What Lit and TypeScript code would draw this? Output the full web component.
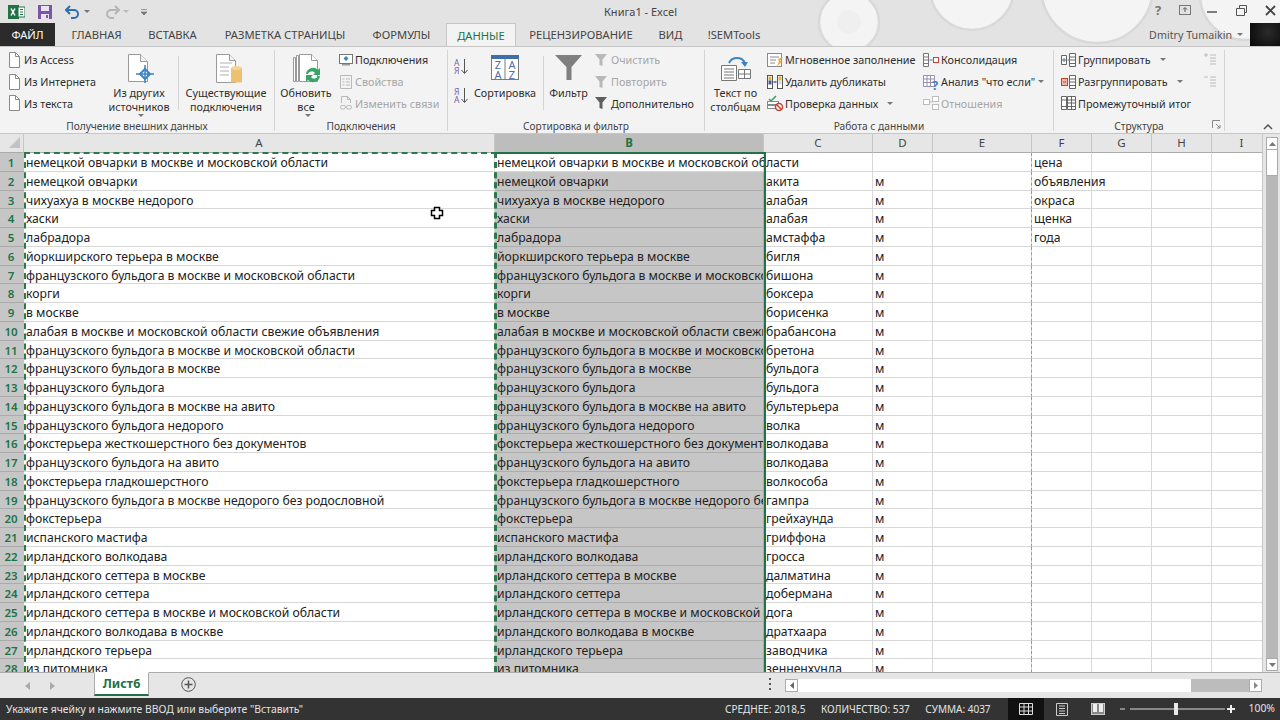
import { LitElement, html, css } from 'lit';
import { customElement } from 'lit/decorators.js';

const colA = [
  'немецкой овчарки в москве и московской области', 'немецкой овчарки', 'чихуахуа в москве недорого', 'хаски', 'лабрадора',
  'йоркширского терьера в москве', 'французского бульдога в москве и московской области', 'корги', 'в москве',
  'алабая в москве и московской области свежие объявления', 'французского бульдога в москве и московской области',
  'французского бульдога в москве', 'французского бульдога', 'французского бульдога в москве на авито',
  'французского бульдога недорого', 'фокстерьера жесткошерстного без документов', 'французского бульдога на авито',
  'фокстерьера гладкошерстного', 'французского бульдога в москве недорого без родословной', 'фокстерьера',
  'испанского мастифа', 'ирландского волкодава', 'ирландского сеттера в москве', 'ирландского сеттера',
  'ирландского сеттера в москве и московской области', 'ирландского волкодава в москве', 'ирландского терьера', 'из питомника',
];
const colC = [
  '', 'акита', 'алабая', 'алабая', 'амстаффа', 'бигля', 'бишона', 'боксера', 'борисенка', 'брабансона', 'бретона', 'бульдога',
  'бульдога', 'бультерьера', 'волка', 'волкодава', 'волкодава', 'волкособа', 'гампра', 'грейхаунда', 'гриффона', 'гросса',
  'далматина', 'добермана', 'дога', 'дратхаара', 'заводчика', 'зенненхунда',
];
const colF = ['цена', 'объявления', 'окраса', 'щенка', 'года'];
const columns = ['A', 'B', 'C', 'D', 'E', 'F', 'G', 'H', 'I'];
const tabs = [
  ['ГЛАВНАЯ', 75], ['ВСТАВКА', 77], ['РАЗМЕТКА СТРАНИЦЫ', 148], ['ФОРМУЛЫ', 85],
] as const;
const tabsAfter = [['РЕЦЕНЗИРОВАНИЕ', 130], ['ВИД', 49], ['!SEMTools', 78]] as const;

const doc = (extra: unknown) => html`<svg class="ic" width="16" height="16" viewBox="0 0 16 16">
  <path d="M2.5 .5h6l4 4v11h-10z" fill="#fff" stroke="#8a8a8a"/><path d="M8.5 .5v4h4" fill="none" stroke="#8a8a8a"/>${extra}
</svg>`;
const line = (d: string, c = '#7d7d7d') => html`<svg class="ic" width="16" height="16" viewBox="0 0 16 16" fill="none" stroke=${c}><path d=${d}/></svg>`;
const funnel = (c: string, extra: unknown = '') => html`<svg class="ic" width="16" height="16" viewBox="0 0 16 16">
  <path d="M1 2h12L8.5 7.500V14l-3-1V7.500z" fill=${c}/>${extra}
</svg>`;

const icons = {
  access: doc(html`<rect x="6" y="6" width="9" height="9" fill="#b5342c"/><text x="10.500" y="13.500" font-size="8" fill="#fff" text-anchor="middle">A</text>`),
  web: doc(html`<circle cx="10.500" cy="11" r="4.500" fill="#3f83c4"/><path d="M6 11h9M10.500 6.500v9" stroke="#fff" stroke-width=".8"/>`),
  text: doc(html`<rect x="7" y="7" width="7" height="8" fill="#fff" stroke="#8a8a8a"/><path d="M8.500 9.500h4M8.500 11.500h4M8.500 13.500h4" stroke="#8a8a8a"/>`),
  conn: html`<svg class="ic" width="16" height="16" viewBox="0 0 16 16"><rect x="1.500" y="2.500" width="13" height="9" fill="#fff" stroke="#777"/><rect x="4" y="12" width="8" height="1.500" fill="#999"/><path d="M8 4l2.500 2.500L8 9 5.500 6.500z" fill="#3f83c4"/></svg>`,
  props: line('M2.500 1.500h11v13h-11zM4.500 5h2M8 5h4M4.500 8h2M8 8h4M4.500 11h2M8 11h4', '#b9b9b9'),
  links: html`<svg class="ic" width="16" height="16" viewBox="0 0 16 16" fill="none" stroke="#b9b9b9"><path d="M3.500 8V1.500h6l3 3V8M9.500 1.500v3h3"/><rect x="2.500" y="10.500" width="5" height="3.500" rx="1.700"/><rect x="8.500" y="10.500" width="5" height="3.500" rx="1.700"/></svg>`,
  flash: html`<svg class="ic" width="18" height="16" viewBox="0 0 18 16"><rect x="1.500" y="1.500" width="14" height="13" fill="#fff" stroke="#8a8a8a"/><path d="M4 5h9M4 8h6M4 11h5" stroke="#8a8a8a"/><path d="M12 7l5-2-3 4 2 .5-5 5 2-5z" fill="#e9a92b"/></svg>`,
  dupes: html`<svg class="ic" width="18" height="16" viewBox="0 0 18 16"><rect x="1.500" y="1.500" width="5" height="13" fill="#fff" stroke="#555"/><rect x="11.500" y="1.500" width="5" height="13" fill="#fff" stroke="#555"/><rect x="2.500" y="2.500" width="3" height="4" fill="#e4b33a"/><rect x="2.500" y="6.500" width="3" height="4" fill="#3f5ea8"/><rect x="12.500" y="2.500" width="3" height="4" fill="#e4b33a"/><rect x="12.500" y="6.500" width="3" height="4" fill="#d8d8d8"/><path d="M7.500 8h3" stroke="#3f5ea8" stroke-width="1.500"/></svg>`,
  valid: html`<svg class="ic" width="18" height="16" viewBox="0 0 18 16"><rect x="1.500" y="6.500" width="11" height="3" fill="#fff" stroke="#8a8a8a"/><rect x="1.500" y="10.500" width="8" height="3" fill="#fff" stroke="#8a8a8a"/><path d="M3 4l2 2 5-5" fill="none" stroke="#3c9a5f" stroke-width="1.500"/><circle cx="13" cy="12" r="3.500" fill="#fff" stroke="#c8402f" stroke-width="1.500"/><path d="M10.500 9.500l5 5" stroke="#c8402f" stroke-width="1.500"/></svg>`,
  cons: html`<svg class="ic" width="18" height="16" viewBox="0 0 18 16"><path d="M1.500 1.500h5v13h-5zM1.500 5h5M1.500 8h5M1.500 11.500h5" fill="#fff" stroke="#777"/><path d="M7.500 8h3" stroke="#3f83c4"/><rect x="11.500" y="5.500" width="5" height="5" fill="#fff" stroke="#c8402f"/></svg>`,
  whatif: html`<svg class="ic" width="18" height="16" viewBox="0 0 18 16"><path d="M1.500 1.500h11v11h-11zM1.500 5h11M1.500 8.500h11M5 1.500v11M8.500 1.500v11" fill="#fff" stroke="#9a8fb0"/><text x="10" y="15.500" font-size="13" font-weight="700" fill="#3f83c4">?</text></svg>`,
  rel: html`<svg class="ic" width="18" height="16" viewBox="0 0 18 16" fill="#fff" stroke="#bdbdbd"><rect x="1.500" y="4.500" width="6" height="5"/><rect x="10.500" y="1.500" width="6" height="5"/><rect x="10.500" y="9.500" width="6" height="5"/><path d="M7.500 7h3"/></svg>`,
  clear: funnel('#b8b8b8', html`<path d="M9 10l5 5M14 10l-5 5" stroke="#b8b8b8" stroke-width="1.500"/>`),
  repeat: funnel('#b8b8b8', html`<circle cx="12" cy="12" r="3" fill="none" stroke="#b8b8b8" stroke-width="1.500"/>`),
  adv: funnel('#5f5f5f', html`<path d="M9 15l1-3 4-4 2 2-4 4z" fill="#3f83c4"/>`),
  group: html`<svg class="ic" width="17" height="16" viewBox="0 0 17 16" fill="#fff" stroke="#666"><path d="M1.500 3.500h5v9h-5zM1.500 8h5M9.500 1.500h6v13h-6zM9.500 5h6M9.500 8h6M9.500 11.500h6"/><path d="M4 6v4M7.500 8H9" stroke="#3f83c4"/></svg>`,
  ungroup: html`<svg class="ic" width="17" height="16" viewBox="0 0 17 16" fill="#fff" stroke="#666"><path d="M9.500 1.500h6v13h-6zM9.500 5h6M9.500 8h6M9.500 11.500h6"/><rect x="1.500" y="4.500" width="6" height="7" fill="#f3b7ab" stroke="#c8402f"/><path d="M3 8h3" stroke="#c8402f"/></svg>`,
  subtotal: html`<svg class="ic" width="17" height="16" viewBox="0 0 17 16" fill="#fff" stroke="#666"><path d="M1.500 1.500h5v13h-5zM1.500 5h5M1.500 11.500h5M7.500 1.500h8v13h-8zM7.500 5h8M7.500 8h8M7.500 11.500h8M11.500 1.500v13"/></svg>`,
  sortAZ: html`<svg width="16" height="24" viewBox="0 0 16 24"><text x="0" y="9" font-size="8.500" fill="#7b5fa8">А</text><text x="0" y="17" font-size="8.500" fill="#7b5fa8">Я</text><path d="M10.500 2v14M7.500 13l3 3.500 3-3.500" fill="none" stroke="#555"/></svg>`,
  sortZA: html`<svg width="16" height="24" viewBox="0 0 16 24"><text x="0" y="9" font-size="8.500" fill="#7b5fa8">Я</text><text x="0" y="17" font-size="8.500" fill="#7b5fa8">А</text><path d="M10.500 2v14M7.500 13l3 3.500 3-3.500" fill="none" stroke="#555"/></svg>`,
};

const bigIcons = {
  other: html`<svg width="36" height="36" viewBox="0 0 36 36"><path d="M7.500 4.500h12l7 7v20h-19z" fill="#fff" stroke="#9a9a9a"/><path d="M19.500 4.500v7h7" fill="#f2f2f2" stroke="#9a9a9a"/><path d="M24 19l5 5-5 5-5-5z" fill="none" stroke="#3f83c4" stroke-width="2"/><path d="M24 15v18M15 24h18" stroke="#3f83c4" stroke-width="1.500"/></svg>`,
  existing: html`<svg width="36" height="36" viewBox="0 0 36 36"><path d="M8.500 4.500h13l6 6v22h-19z" fill="#fff" stroke="#9a9a9a"/><path d="M21.500 4.500v6h6" fill="#f2f2f2" stroke="#9a9a9a"/><path d="M12 13h12M12 17h9M12 21h9M12 25h9" stroke="#b0b0b0"/><path d="M23 18h11v14.500H23z" fill="#ecc271"/><ellipse cx="28.500" cy="18" rx="5.500" ry="2" fill="#f4d699"/></svg>`,
  refresh: html`<svg width="36" height="36" viewBox="0 0 36 36" fill="#fff" stroke="#9a9a9a"><path d="M5.500 7.500v24h2v-24zM8.500 5.500v26h2v-26z"/><path d="M11.500 4.500h12l6 6v21h-18z"/><path d="M23.500 4.500v6h6"/><path d="M18 24a7 7 0 0 1 12-4l2-2v7h-7l2-2a4 4 0 0 0-7 1zM32 26a7 7 0 0 1-12 4l-2 2v-7h7l-2 2a4 4 0 0 0 7-1z" fill="#3aa468" stroke="none"/></svg>`,
  sort: html`<svg width="28" height="26" viewBox="0 0 28 26"><rect x=".5" y=".5" width="27" height="24" fill="#fff" stroke="#7a7a7a"/><rect x="0" y="0" width="28" height="4" fill="#3f6fa8"/><path d="M14 4v21" stroke="#7a7a7a"/><g font-size="11" fill="#4b6fa8" text-anchor="middle"><text x="7" y="14">Z</text><text x="21" y="14">A</text><text x="7" y="24">A</text><text x="21" y="24">Z</text></g></svg>`,
  filter: html`<svg width="28" height="26" viewBox="0 0 28 26"><path d="M0 0h27L16.500 12v13h-5V12z" fill="#7f7f7f"/></svg>`,
  t2c: html`<svg width="32" height="32" viewBox="0 0 32 32"><path d="M1.500 13.500h15v15h-15z" fill="#fff" stroke="#777"/><path d="M4 17h10M4 20h10M4 23h10M4 26h10" stroke="#777"/><path d="M18.500 17.500h12v9h-12zM18.500 22h12M24.500 17.500v9" fill="#fff" stroke="#777"/><path d="M9 11a9 9 0 0 1 16 0" fill="none" stroke="#3f83c4" stroke-width="2"/><path d="M21 10h7l-3 5z" fill="#3f83c4"/></svg>`,
};

const caret = html`<span class="caret"></span>`;
const farCaret = html`<span class="caret far"></span>`;

@customElement('app-root')
export class AppRoot extends LitElement {
  static styles = css`
    :host {
      display: block;
      width: 1280px;
      height: 720px;
      overflow: hidden;
      font-family: "Noto Sans", "Open Sans", sans-serif;
      background: #e3e3e3;
      color: #444;
    }
    .top {
      position: relative;
      height: 46px;
      background: #e3e3e3;
      overflow: hidden;
    }
    .wood {
      position: absolute;
      inset: 0;
    }
    .title {
      position: relative;
      display: flex;
      align-items: center;
      height: 23px;
      padding-left: 8px;
    }
    .qat {
      display: flex;
      align-items: center;
    }
    .qat .gap {
      margin-left: 12px;
    }
    .qat .gap-wide {
      margin-left: 14px;
    }
    .qat .caret {
      margin-left: 3px;
    }
    .qat .caret.dim {
      border-top-color: #bbb;
    }
    .caption {
      position: absolute;
      left: 604px;
      top: 4px;
      font-size: 11px;
      color: #444;
    }
    .winbtns {
      position: absolute;
      top: 2px;
      right: 0;
      display: flex;
    }
    .tabs {
      position: relative;
      display: flex;
      height: 23px;
      font-size: 11.200px;
      line-height: 24px;
    }
    .tab {
      text-align: center;
      white-space: nowrap;
    }
    .tab.file {
      width: 55px;
      background: #2b2b2b;
      color: #fff;
    }
    .tab.first {
      margin-left: 4px;
    }
    .tab.active {
      width: 70px;
      margin-left: 2px;
      background: #f3f3f3;
      color: #217346;
      border: 1px solid #c6c6c6;
      border-bottom: none;
      box-sizing: border-box;
      margin-bottom: -1px;
      height: 24px;
      z-index: 1;
    }
    .user {
      position: absolute;
      right: 0;
      top: 0;
      height: 23px;
      display: flex;
      align-items: center;
    }
    .username {
      font-size: 10.700px;
      color: #555;
    }
    .user .caret {
      margin-left: 5px;
    }
    .avatar {
      width: 30px;
      height: 23px;
      margin-left: 7px;
      background: radial-gradient(circle at 60% 40%, #2a2a2a, #080808);
    }
    .ribbon {
      position: relative;
      display: flex;
      box-sizing: border-box;
      height: 88px;
      background: #f3f3f3;
      border-top: 1px solid #c6c6c6;
      border-bottom: 1px solid #c6c6c6;
      font-size: 10.800px;
      color: #2f2f2f;
    }
    .group {
      position: relative;
      display: flex;
      flex-direction: column;
      box-sizing: border-box;
      flex: none;
      margin: 3px 0 2px;
      border-right: 1px solid #d4d4d4;
    }
    .g1 { width: 275px; }
    .g2 { width: 173px; }
    .g3 { width: 257px; }
    .g4 { width: 349px; }
    .g5 { width: 171px; }
    .body {
      display: flex;
      flex: none;
      height: 69px;
    }
    .label {
      text-align: center;
      font-size: 10.200px;
      line-height: 14px;
      color: #444;
      white-space: nowrap;
    }
    .col {
      display: flex;
      flex-direction: column;
      flex: none;
    }
    .ext-col { margin-left: 7px; width: 93px; }
    .conn-col { margin-left: 1px; }
    .filter-col { margin-left: 1px; }
    .sort-col { margin: 7px 0 0 6px; width: 20px; gap: 5px; }
    .valid-col { width: 156px; }
    .outline-col { margin-left: 6px; width: 141px; }
    .detail-col { margin-left: 1px; }
    .row {
      display: flex;
      align-items: center;
      height: 21.700px;
      margin-top: -1px;
      margin-bottom: 1px;
      white-space: nowrap;
    }
    .row .ic {
      flex: none;
      margin-right: 1px;
    }
    .off {
      color: #a6a6a6;
    }
    .big {
      display: flex;
      flex-direction: column;
      align-items: center;
      flex: none;
      text-align: center;
      line-height: 14px;
    }
    .big .pic {
      display: flex;
      align-items: center;
      justify-content: center;
      height: 35px;
      margin-bottom: 1px;
    }
    .w-other { width: 78px; }
    .w-existing { width: 94px; }
    .w-refresh { width: 62px; }
    .w-sort { width: 62px; }
    .w-filter { width: 49px; }
    .w-t2c { width: 61px; }
    .vdiv {
      flex: none;
      width: 1px;
      height: 54px;
      margin-top: 6px;
      background: #d4d4d4;
    }
    .vdiv.sort-gap {
      margin-left: 7px;
    }
    .caret {
      display: inline-block;
      width: 0;
      height: 0;
      margin-left: 3px;
      vertical-align: middle;
      border-left: 3px solid transparent;
      border-right: 3px solid transparent;
      border-top: 3px solid #777;
    }
    .caret.far {
      margin-left: 9px;
    }
    .launcher {
      position: absolute;
      right: 3px;
      bottom: 2px;
    }
    .collapse {
      position: absolute;
      right: 7px;
      bottom: 3px;
    }
    .sheet {
      position: relative;
      height: 538px;
      overflow: hidden;
      background: #fff;
    }
    .grid {
      display: grid;
      grid-template-columns: 24px 471px 269px 109px 60px 99px 60px 60px 60px 60px;
      grid-auto-rows: 18.750px;
      grid-template-rows: 19px;
      font-size: 12.200px;
      color: #222;
    }
    .cell {
      box-sizing: border-box;
      border-right: 1px solid #d8d8d8;
      border-bottom: 1px solid #d8d8d8;
      padding-left: 2px;
      line-height: 19px;
      white-space: nowrap;
      overflow: hidden;
    }
    .cell.sel {
      background: #c6c6c6;
      border-color: #acacac;
    }
    .cell.over {
      overflow: visible;
      position: relative;
    }
    .cell.brk {
      border-left: 1px dashed #999;
      margin-left: -1px;
      overflow: visible;
    }
    .corner, .chead {
      background: #e6e6e6;
      border-right: 1px solid #c6c6c6;
      border-bottom: 1px solid #ababab;
      text-align: center;
      font-size: 11.500px;
      line-height: 18px;
      color: #444;
    }
    .corner svg {
      display: block;
      margin-left: 5px;
    }
    .chead.on {
      background: #bdbdbd;
      color: #217346;
      font-weight: 700;
    }
    .rhead {
      box-sizing: border-box;
      background: #c6c6c6;
      border-bottom: 1px solid #ababab;
      text-align: center;
      font-size: 11.500px;
      line-height: 19px;
      color: #217346;
      font-weight: 600;
      padding-right: 2px;
    }
    .ants {
      position: absolute;
      top: 18px;
      bottom: 0;
      border: 2px dashed #2a7a4e;
      border-bottom: none;
      pointer-events: none;
    }
    .ants.a {
      left: 24px;
      width: 469px;
    }
    .ants.b {
      left: 494px;
      width: 268px;
      border-top: 2px solid #217346;
      border-right: 2px solid #217346;
    }
    .pointer {
      position: absolute;
      left: 430px;
      top: 72px;
    }
    .vbar {
      position: absolute;
      top: 0;
      right: 0;
      bottom: 0;
      width: 18px;
      box-sizing: border-box;
      display: flex;
      flex-direction: column;
      padding: 3px 2px 1px 3px;
      background: #e6e6e6;
      border-left: 1px solid #c6c6c6;
    }
    .vbar .btn {
      height: 13px;
      flex: none;
      background: #fff;
      border: 1px solid #ababab;
      box-sizing: border-box;
      display: flex;
      align-items: center;
      justify-content: center;
    }
    .vbar .thumb {
      height: 26px;
      flex: none;
      background: #fff;
      border: 1px solid #ababab;
      border-top: none;
      box-sizing: border-box;
    }
    .vbar .track {
      flex: 1;
      background: #b8b8b8;
    }
    .sheets {
      display: flex;
      align-items: stretch;
      box-sizing: border-box;
      height: 26px;
      background: #e6e6e6;
      border-top: 1px solid #ababab;
    }
    .arrows {
      display: flex;
      align-items: center;
      gap: 20px;
      width: 94px;
      box-sizing: border-box;
      padding-left: 25px;
    }
    .sheet-tab {
      width: 55px;
      height: 24px;
      box-sizing: border-box;
      background: #fff;
      margin-top: -1px;
      border: 1px solid #ababab;
      border-top-color: #fff;
      border-bottom: 2px solid #217346;
      text-align: center;
      font-size: 12.500px;
      font-weight: 700;
      line-height: 21px;
      color: #217346;
    }
    .add {
      margin: 4px 0 0 32px;
    }
    .dots {
      margin: 5px 0 0 573px;
    }
    .hbar {
      display: flex;
      margin: 6px 0 0 13px;
      height: 13px;
      width: 477px;
      background: #bcbcbc;
    }
    .hbar .btn {
      width: 13px;
      background: #fff;
      border: 1px solid #ababab;
      box-sizing: border-box;
      display: flex;
      align-items: center;
      justify-content: center;
    }
    .hbar .thumb {
      width: 393px;
      background: #fff;
    }
    .hbar .track {
      flex: 1;
    }
    .status {
      position: relative;
      display: flex;
      align-items: center;
      height: 22px;
      background: #333;
      color: #e4e4e4;
      font-size: 10.400px;
      white-space: nowrap;
    }
    .msg {
      margin-left: 6px;
      width: 719px;
    }
    .stat {
      margin-right: 15.500px;
      font-size: 10px;
    }
    .views {
      position: absolute;
      left: 1008px;
      top: 0;
      display: flex;
      height: 22px;
    }
    .view {
      width: 36px;
      display: flex;
      align-items: center;
      justify-content: center;
    }
    .view.on {
      background: #111;
    }
    .zoom {
      position: absolute;
      left: 1120px;
      top: 0;
      height: 22px;
      display: flex;
      align-items: center;
    }
    .pct {
      position: absolute;
      right: 5px;
      top: 3px;
    }
  `;

  small(icon: unknown, label: string, off = false, tail: unknown = '') {
    return html`<div class="row ${off ? 'off' : ''}">${icon}<span>${label}</span>${tail}</div>`;
  }

  renderTop() {
    return html`
      <div class="top">
        <svg class="wood" width="1280" height="46" viewBox="0 0 1280 46">
          <g fill="#f4f4f4" stroke="#d9d9d9" stroke-width="2.500">
            <circle cx="849" cy="22" r="30"/>
            <circle cx="972" cy="-12" r="42"/>
            <circle cx="1097" cy="-13" r="56"/>
            <circle cx="1245" cy="-5" r="45"/>
          </g>
          <circle cx="849" cy="22" r="12" fill="#efefef"/>
        </svg>
        <div class="title">
          <div class="qat">
            <svg width="17" height="16" viewBox="0 0 17 16"><rect x="0" y="1" width="11" height="14" fill="#217346"/><rect x="10" y="3" width="7" height="10" fill="#fff" stroke="#217346"/><path d="M12 5.500h3M12 8h3M12 10.500h3" stroke="#217346"/><path d="M3 4.500l4 7M7 4.500l-4 7" stroke="#fff" stroke-width="1.500"/></svg>
            <svg class="gap" width="16" height="16" viewBox="0 0 16 16"><rect x="1" y="1" width="14" height="14" fill="#7a55a8"/><rect x="4" y="2" width="8" height="5" fill="#e9e3f2"/><rect x="4" y="10" width="8" height="5" fill="#e9e3f2"/><rect x="9" y="11" width="2" height="3" fill="#7a55a8"/></svg>
            <svg class="gap" width="16" height="14" viewBox="0 0 16 14"><path d="M5 1L1 5l4 4M1.500 5H9a4 4 0 0 1 0 8H6" fill="none" stroke="#2f6fb0" stroke-width="2"/></svg>
            ${caret}
            <svg class="gap-wide" width="16" height="14" viewBox="0 0 16 14"><path d="M11 1l4 4-4 4M14.500 5H7a4 4 0 0 0 0 8h3" fill="none" stroke="#b5b5b5" stroke-width="2"/></svg>
            <span class="caret dim"></span>
            <svg class="gap" width="7" height="8" viewBox="0 0 7 8"><path d="M0 1.500h6M0 4h6l-3 3z" fill="#777" stroke="#777" stroke-width=".7"/></svg>
          </div>
          <div class="caption">Книга1 - Excel</div>
          <div class="winbtns">
            <svg width="128" height="18" viewBox="0 0 128 18">
              <text x="3" y="13" font-size="13" font-weight="700" fill="#777">?</text>
              <rect x="27.500" y="3.500" width="11" height="9" fill="none" stroke="#777"/><path d="M33 10V6M31 7.500l2-2 2 2" fill="none" stroke="#555"/>
              <path d="M55 10h10" stroke="#555" stroke-width="1.500"/>
              <path d="M84.500 6.500h8v7h-8zM87.500 6.500v-3h7v7h-2" fill="none" stroke="#555"/>
              <path d="M114 4l9 9M123 4l-9 9" stroke="#444" stroke-width="1.800"/>
            </svg>
          </div>
        </div>
        <div class="tabs">
          <div class="tab file">ФАЙЛ</div>
          ${tabs.map(([name, w], i) => html`<div class="tab ${i === 0 ? 'first' : ''}" style="width:${w}px">${name}</div>`)}
          <div class="tab active">ДАННЫЕ</div>
          ${tabsAfter.map(([name, w]) => html`<div class="tab" style="width:${w}px">${name}</div>`)}
          <div class="user">
            <span class="username">Dmitry Tumaikin</span>${caret}
            <div class="avatar"></div>
          </div>
        </div>
      </div>
    `;
  }

  renderRibbon() {
    return html`
      <div class="ribbon">
        <div class="group g1">
          <div class="body">
            <div class="col ext-col">
              ${this.small(icons.access, 'Из Access')}
              ${this.small(icons.web, 'Из Интернета')}
              ${this.small(icons.text, 'Из текста')}
            </div>
            <div class="big w-other"><div class="pic">${bigIcons.other}</div>Из других<br />источников${caret}</div>
            <div class="vdiv"></div>
            <div class="big w-existing"><div class="pic">${bigIcons.existing}</div>Существующие<br />подключения</div>
          </div>
          <div class="label">Получение внешних данных</div>
        </div>
        <div class="group g2">
          <div class="body">
            <div class="big w-refresh"><div class="pic">${bigIcons.refresh}</div>Обновить<br />все${caret}</div>
            <div class="col conn-col">
              ${this.small(icons.conn, 'Подключения')}
              ${this.small(icons.props, 'Свойства', true)}
              ${this.small(icons.links, 'Изменить связи', true)}
            </div>
          </div>
          <div class="label">Подключения</div>
        </div>
        <div class="group g3">
          <div class="body">
            <div class="col sort-col">${icons.sortAZ}${icons.sortZA}</div>
            <div class="big w-sort"><div class="pic">${bigIcons.sort}</div>Сортировка</div>
            <div class="vdiv sort-gap"></div>
            <div class="big w-filter"><div class="pic">${bigIcons.filter}</div>Фильтр</div>
            <div class="col filter-col">
              ${this.small(icons.clear, 'Очистить', true)}
              ${this.small(icons.repeat, 'Повторить', true)}
              ${this.small(icons.adv, 'Дополнительно')}
            </div>
          </div>
          <div class="label">Сортировка и фильтр</div>
        </div>
        <div class="group g4">
          <div class="body">
            <div class="big w-t2c"><div class="pic">${bigIcons.t2c}</div>Текст по<br />столбцам</div>
            <div class="col valid-col">
              ${this.small(icons.flash, 'Мгновенное заполнение')}
              ${this.small(icons.dupes, 'Удалить дубликаты')}
              ${this.small(icons.valid, 'Проверка данных', false, farCaret)}
            </div>
            <div class="col">
              ${this.small(icons.cons, 'Консолидация')}
              ${this.small(icons.whatif, 'Анализ "что если"', false, caret)}
              ${this.small(icons.rel, 'Отношения', true)}
            </div>
          </div>
          <div class="label">Работа с данными</div>
        </div>
        <div class="group g5">
          <div class="body">
            <div class="col outline-col">
              ${this.small(icons.group, 'Группировать', false, farCaret)}
              ${this.small(icons.ungroup, 'Разгруппировать', false, farCaret)}
              ${this.small(icons.subtotal, 'Промежуточный итог')}
            </div>
            <div class="col detail-col">
              ${this.small(line('M2 3h4M4 1v4M8 3h6M8 6h6M8 9h6M8 12h6', '#bcbcbc'), '')}
              ${this.small(line('M2 3h4M8 3h6M8 6h6M8 9h6M8 12h6', '#bcbcbc'), '')}
            </div>
          </div>
          <div class="label">Структура</div>
          <svg class="launcher" width="9" height="9" viewBox="0 0 9 9" fill="none" stroke="#888"><path d="M.5 8V.5H8M4 4l4 4M8 5v3H5"/></svg>
        </div>
        <svg class="collapse" width="10" height="6" viewBox="0 0 10 6" fill="none" stroke="#555" stroke-width="1.500"><path d="M1 5l4-4 4 4"/></svg>
      </div>
    `;
  }

  renderGrid() {
    return html`
      <div class="sheet">
        <div class="grid">
          <div class="corner"><svg width="18" height="16" viewBox="0 0 18 16"><path d="M15 3v11H4z" fill="#c2c2c2"/></svg></div>
          ${columns.map((c) => html`<div class="chead ${c === 'B' ? 'on' : ''}">${c}</div>`)}
          ${colA.map((text, i) => html`
            <div class="rhead">${i + 1}</div>
            <div class="cell">${text}</div>
            <div class="cell ${i === 0 ? 'over' : 'sel'}">${text}</div>
            <div class="cell">${i === 0 ? '' : colC[i]}</div>
            <div class="cell">${i === 0 ? '' : 'м'}</div>
            <div class="cell"></div>
            <div class="cell brk">${colF[i] ?? ''}</div>
            <div class="cell"></div>
            <div class="cell"></div>
            <div class="cell"></div>
          `)}
        </div>
        <div class="ants a"></div>
        <div class="ants b"></div>
        <svg class="pointer" width="14" height="14" viewBox="0 0 14 14"><path d="M4.500 1.500h5v3h3v5h-3v3h-5v-3h-3v-5h3z" fill="#fff" stroke="#000" stroke-width="1.500"/></svg>
        <div class="vbar">
          <div class="btn"><svg width="7" height="4" viewBox="0 0 7 4"><path d="M0 4l3.500-4L7 4z" fill="#777"/></svg></div>
          <div class="thumb"></div>
          <div class="track"></div>
          <div class="btn"><svg width="7" height="4" viewBox="0 0 7 4"><path d="M0 0l3.500 4L7 0z" fill="#777"/></svg></div>
        </div>
      </div>
    `;
  }

  renderBottom() {
    return html`
      <div class="sheets">
        <div class="arrows">
          <svg width="5" height="8" viewBox="0 0 5 8"><path d="M5 0L0 4l5 4z" fill="#aaa"/></svg>
          <svg width="5" height="8" viewBox="0 0 5 8"><path d="M0 0l5 4-5 4z" fill="#aaa"/></svg>
        </div>
        <div class="sheet-tab">Лист6</div>
        <svg class="add" width="15" height="15" viewBox="0 0 15 15" fill="none" stroke="#555"><circle cx="7.500" cy="7.500" r="6.800"/><path d="M7.500 3.500v8M3.500 7.500h8" stroke-width="1.500"/></svg>
        <svg class="dots" width="3" height="12" viewBox="0 0 3 12" fill="#555"><rect x="0" y="0" width="2" height="2"/><rect x="0" y="5" width="2" height="2"/><rect x="0" y="10" width="2" height="2"/></svg>
        <div class="hbar">
          <div class="btn"><svg width="4" height="7" viewBox="0 0 4 7"><path d="M4 0L0 3.500 4 7z" fill="#666"/></svg></div>
          <div class="thumb"></div>
          <div class="track"></div>
          <div class="btn"><svg width="4" height="7" viewBox="0 0 4 7"><path d="M0 0l4 3.500L0 7z" fill="#888"/></svg></div>
        </div>
      </div>
      <div class="status">
        <span class="msg">Укажите ячейку и нажмите ВВОД или выберите "Вставить"</span>
        <span class="stat">СРЕДНЕЕ: 2018,5</span>
        <span class="stat">КОЛИЧЕСТВО: 537</span>
        <span class="stat">СУММА: 4037</span>
        <div class="views">
          <div class="view on"><svg width="14" height="12" viewBox="0 0 14 12" fill="none" stroke="#ddd"><path d="M.5.500h13v11H.500zM.5 4h13M.5 8h13M5 .500v11M9.500 .500v11"/></svg></div>
          <div class="view"><svg width="12" height="13" viewBox="0 0 12 13" fill="none" stroke="#ccc"><path d="M.5.500h11v12H.500zM3 3h6M3 5.500h6M3 8h6M3 10.500h6"/></svg></div>
          <div class="view"><svg width="14" height="12" viewBox="0 0 14 12"><rect x=".5" y=".5" width="13" height="11" fill="#888" stroke="#ccc"/><rect x="2" y="1" width="4" height="8" fill="#eee"/><rect x="8" y="1" width="4" height="8" fill="#eee"/></svg></div>
        </div>
        <div class="zoom">
          <svg width="116" height="14" viewBox="0 0 116 14">
            <path d="M0 7h5M10 7h95" stroke="#ddd"/>
            <rect x="54" y="1" width="4" height="12" fill="#e8e8e8"/>
            <path d="M107 7h8M111 3v8" stroke="#eee" stroke-width="2"/>
          </svg>
        </div>
        <span class="pct">100%</span>
      </div>
    `;
  }

  render() {
    return html`${this.renderTop()}${this.renderRibbon()}${this.renderGrid()}${this.renderBottom()}`;
  }
}
